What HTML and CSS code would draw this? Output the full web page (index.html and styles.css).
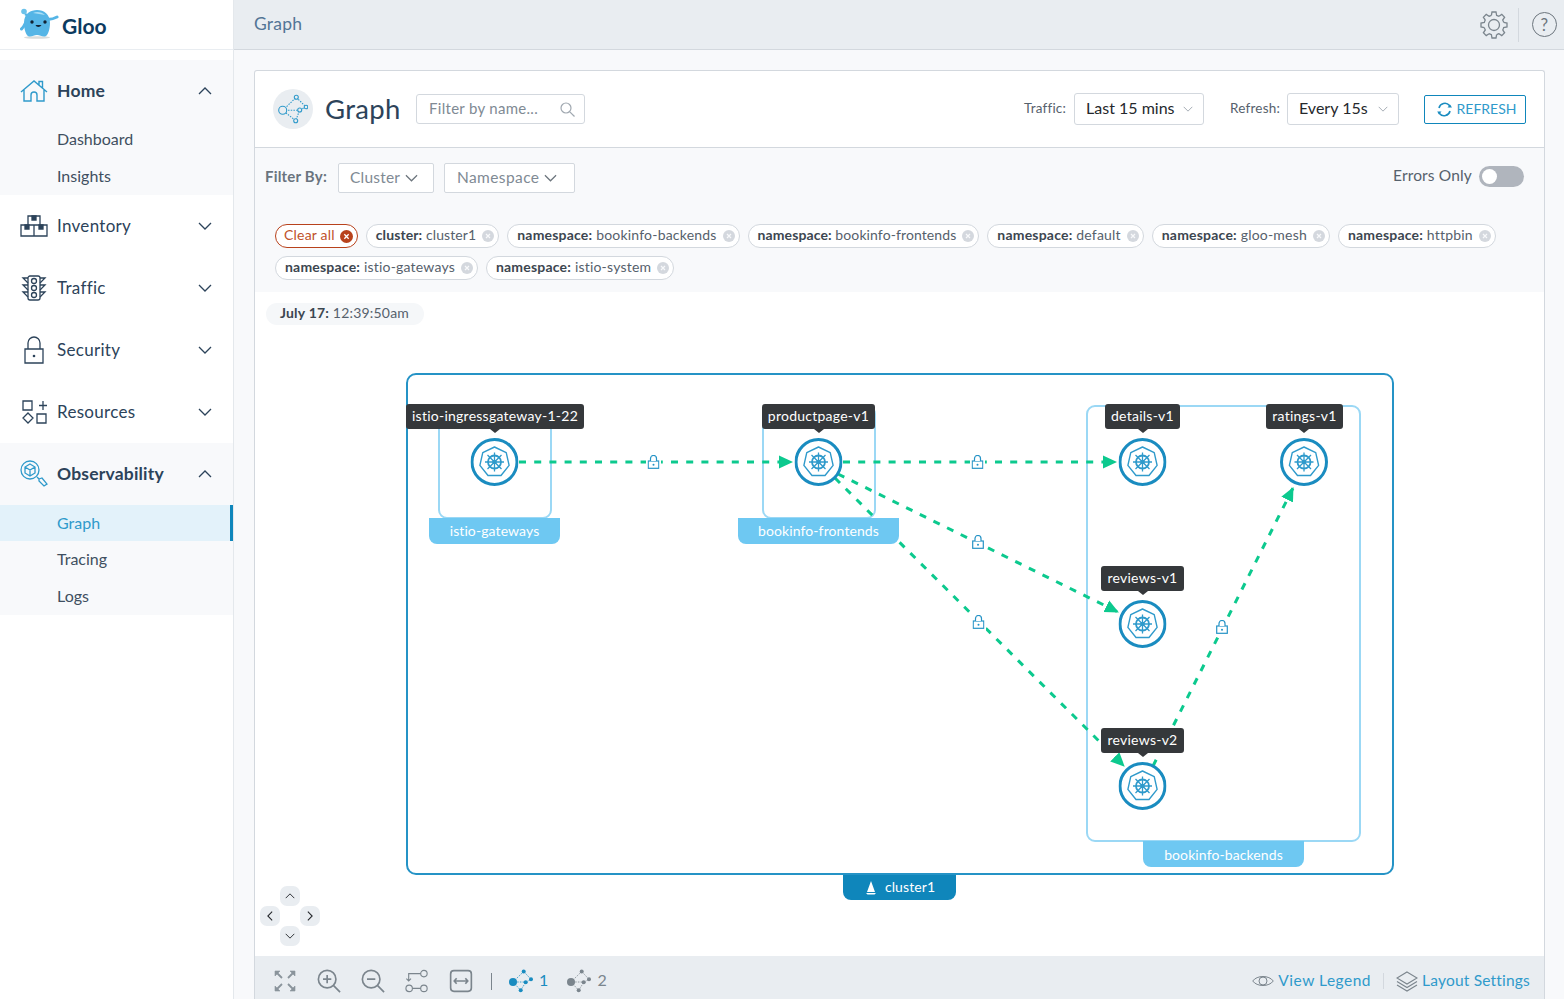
FILE: index.html
```html
<!DOCTYPE html>
<html lang="en">
<head>
    <meta charset="UTF-8">
    <title>Gloo Graph</title>
    <link rel="stylesheet" href="styles.css">
</head>
<body>
    <svg class="defs" width="0" height="0">
        <defs>
            <symbol id="chev-down" viewBox="0 0 14 8"><path d="M1 1l6 6 6-6" fill="none" stroke="currentColor" stroke-width="1.3"/></symbol>
            <symbol id="chev-up" viewBox="0 0 14 8"><path d="M1 7l6-6 6 6" fill="none" stroke="currentColor" stroke-width="1.3"/></symbol>
            <symbol id="chip-x" viewBox="0 0 12 12"><circle cx="6" cy="6" r="6" fill="#d4d8de"/><path d="M4 4l4 4M8 4l-4 4" stroke="#f8f9fb" stroke-width="1.2"/></symbol>
            <symbol id="graph-mini" viewBox="0 0 26 24">
                <path d="M4 13L14.700 2.500 22 10.300 16.700 13.300 11.700 21.300 4 13H16.700" fill="none" stroke="currentColor" stroke-width=".8" stroke-dasharray="1.500 1.200"/>
                <circle cx="4" cy="13" r="4" fill="currentColor"/><circle cx="14.700" cy="2.500" r="2" fill="currentColor"/>
                <circle cx="22" cy="10.300" r="2" fill="currentColor"/><circle cx="16.700" cy="13.300" r="2" fill="currentColor"/><circle cx="11.700" cy="21.300" r="2" fill="currentColor"/>
            </symbol>
            <symbol id="k8s" viewBox="-24 -24 48 48">
                <circle r="22.500" fill="#fff" stroke="#1a8cc0" stroke-width="3"/>
                <path d="M0-15L11.730-9.350 14.620 3.340 6.510 13.510H-6.510L-14.620 3.340-11.730-9.350Z" fill="none" stroke="#2f9acb" stroke-width="1.400" stroke-linejoin="round"/>
                <circle r="6.500" fill="none" stroke="#2f9acb" stroke-width="1.800"/>
                <path d="M0-9.500V9.500M-9.500 0H9.500M-7-7L7 7M7-7L-7 7" stroke="#2f9acb" stroke-width="1.300"/>
                <circle r="2.200" fill="#2f9acb"/>
            </symbol>
            <symbol id="lock" viewBox="0 0 12 14">
                <rect x=".7" y="6" width="10.600" height="7.300" fill="#fff" stroke="#2593c6" stroke-width="1.200"/>
                <path d="M3 6V3.500a3 3 0 016 0V6" fill="#fff" stroke="#2593c6" stroke-width="1.200"/>
                <circle cx="6" cy="9.700" r="1" fill="#2593c6"/>
            </symbol>
        </defs>
    </svg>

    <div class="app">
        <aside class="sidebar">
            <div class="logo">
                <svg class="logo-mark" width="40" height="40" viewBox="0 0 40 40">
                    <ellipse cx="18" cy="32.500" rx="13" ry="1.300" fill="#d8dcdc"/>
                    <path d="M2.500 24C5 22 6 19 8 15M28 14c3 1 6 0 10-2" fill="none" stroke="#55b5e6" stroke-width="3" stroke-linecap="round"/>
                    <path d="M6 9l5 3" stroke="#55b5e6" stroke-width="2.500" fill="none"/>
                    <circle cx="5" cy="6.500" r="2.800" fill="#6cc2ea"/>
                    <path d="M5 18C5 8 12 5 18 5 25 5 31 9 31 18 31 24 29 31 26 31.500 23 32 21 30 18 30 15 30 13 32 10 31.500 7 31 5 24 5 18Z" fill="#55b5e6"/>
                    <path d="M14 8c4-2 9-1 12 2-4-1-8-1-12-2z" fill="#a9def6"/>
                    <circle cx="13" cy="17" r="1.700" fill="#123"/><circle cx="26" cy="17" r="1.700" fill="#123"/>
                    <path d="M16.500 20c1 2.500 4.500 2.500 6 0z" fill="#123"/>
                </svg>
                <span class="logo-text">Gloo</span>
            </div>
            <nav class="nav">
                <div class="nav-group is-open">
                    <div class="nav-item is-bold">
                        <svg class="nav-icon" viewBox="0 0 28 24" fill="none" stroke="#2f9acb" stroke-width="1.400"><path d="M1 13L14 2l13 11M4 10.500V22h7v-6a3 3 0 016 0v6h7V10.500M19 6V2.500h3.500V9"/></svg>
                        <span>Home</span>
                        <svg class="nav-chev"><use href="#chev-up"/></svg>
                    </div>
                    <a class="nav-sub">Dashboard</a>
                    <a class="nav-sub">Insights</a>
                </div>
                <div class="nav-item">
                    <svg class="nav-icon" viewBox="0 0 28 24" fill="none" stroke="#2c435a" stroke-width="1.300"><path d="M8 11V2h12v9M1 11h26v11H1zM14 11v11"/><path d="M12 2h4v4h-4zM5 11h4v4H5zM19 11h4v4h-4z" fill="#2c435a"/></svg>
                    <span>Inventory</span>
                    <svg class="nav-chev"><use href="#chev-down"/></svg>
                </div>
                <div class="nav-item">
                    <svg class="nav-icon" viewBox="0 0 28 26" fill="none" stroke="#2c435a" stroke-width="1.300"><rect x="8" y="1" width="12" height="24" rx="2"/><circle cx="14" cy="6" r="2.500"/><circle cx="14" cy="13" r="2.500"/><circle cx="14" cy="20" r="2.500"/><path d="M8 3H3l5 5M8 10H3l5 5M8 17H3l5 5M20 3h5l-5 5M20 10h5l-5 5M20 17h5l-5 5"/></svg>
                    <span>Traffic</span>
                    <svg class="nav-chev"><use href="#chev-down"/></svg>
                </div>
                <div class="nav-item">
                    <svg class="nav-icon" viewBox="0 0 28 28" fill="none" stroke="#2c435a" stroke-width="1.300"><path d="M5 13h18v14H5zM8 13V7a6 6 0 0112 0v6"/><circle cx="14" cy="20" r="1.300" fill="#2c435a" stroke="none"/></svg>
                    <span>Security</span>
                    <svg class="nav-chev"><use href="#chev-down"/></svg>
                </div>
                <div class="nav-item">
                    <svg class="nav-icon" viewBox="0 0 28 24" fill="none" stroke="#2c435a" stroke-width="1.300"><path d="M3 1h9v9H3zM19 5.500h8M23 1v9M8 13l5 5-5 5-5-5zM17 14h9v9h-9z"/></svg>
                    <span>Resources</span>
                    <svg class="nav-chev"><use href="#chev-down"/></svg>
                </div>
                <div class="nav-group is-open">
                    <div class="nav-item is-bold">
                        <svg class="nav-icon" viewBox="0 0 28 28" fill="none" stroke="#2f9acb" stroke-width="1.300"><circle cx="10" cy="10" r="9"/><path d="M10 4l5 3v6l-5 3-5-3V7zM5 7l5 3 5-3M10 10v6"/><path d="M17 17l2 2M19 19l3-1 5 6-3 2-5-5z"/></svg>
                        <span>Observability</span>
                        <svg class="nav-chev"><use href="#chev-up"/></svg>
                    </div>
                    <a class="nav-sub is-active">Graph</a>
                    <a class="nav-sub">Tracing</a>
                    <a class="nav-sub">Logs</a>
                </div>
            </nav>
        </aside>

        <div class="main">
            <header class="topbar">
                <span class="crumb">Graph</span>
                <div class="topbar-tools">
                    <svg class="gear" width="28" height="28" viewBox="-14 -14 28 28" fill="none" stroke="#7b858d" stroke-width="1.300">
                        <circle r="5.500"/>
                        <g id="gear-tooth"><path d="M-2.600-9.660L-2-13H2L2.600-9.660A10 10 0 015-8.660"/></g>
                        <use href="#gear-tooth" transform="rotate(45)"/>
                        <use href="#gear-tooth" transform="rotate(90)"/>
                        <use href="#gear-tooth" transform="rotate(135)"/>
                        <use href="#gear-tooth" transform="rotate(180)"/>
                        <use href="#gear-tooth" transform="rotate(225)"/>
                        <use href="#gear-tooth" transform="rotate(270)"/>
                        <use href="#gear-tooth" transform="rotate(315)"/>
                    </svg>
                    <span class="topbar-sep"></span>
                    <span class="help">?</span>
                </div>
            </header>

            <section class="card">
                <div class="card-head">
                    <span class="head-icon">
                        <svg width="30" height="30" viewBox="0 0 30 30" fill="none" stroke="#2f9acb" stroke-width="1.100"><path d="M4.700 16.300L18.300 3.300 28 13 21.700 16 17.700 26.700 4.700 16.300H21.700" stroke-dasharray="1.500 1.200"/><circle cx="4.700" cy="16.300" r="4" fill="#e9edf1"/><circle cx="18.300" cy="3.300" r="2" fill="#e9edf1"/><circle cx="28" cy="13" r="1.800" fill="#e9edf1"/><circle cx="21.700" cy="16" r="2" fill="#e9edf1"/><circle cx="17.700" cy="26.700" r="2" fill="#e9edf1"/></svg>
                    </span>
                    <h1 class="title">Graph</h1>
                    <div class="search">
                        <span class="lift">Filter by name...</span>
                        <svg width="15" height="15" viewBox="0 0 15 15" fill="none" stroke="#a0a8b0" stroke-width="1.200"><circle cx="6" cy="6" r="5"/><path d="M9.800 9.800L14.500 14.500"/></svg>
                    </div>
                    <div class="head-right">
                        <span class="select-label lift">Traffic:</span>
                        <div class="select select-traffic"><span class="lift">Last 15 mins</span><svg class="select-chev"><use href="#chev-down"/></svg></div>
                        <span class="select-label select-label-gap lift">Refresh:</span>
                        <div class="select select-refresh"><span class="lift">Every 15s</span><svg class="select-chev"><use href="#chev-down"/></svg></div>
                        <button class="refresh">
                            <svg width="15" height="15" viewBox="0 0 15 15" fill="none" stroke="#1a8cc0" stroke-width="1.600"><path d="M2 6a6 6 0 0110.500-2.500L13 5M13 9A6 6 0 012.500 11.500L2 10"/><path d="M10.500 5.500H15L13 2.500zM.2 9.500h4.300L2 12.500z" fill="#1a8cc0" stroke="none"/></svg>
                            <span class="refresh-text">REFRESH</span>
                        </button>
                    </div>
                </div>

                <div class="filters">
                    <div class="filter-row">
                        <span class="filter-label">Filter By:</span>
                        <div class="dropdown dropdown-cluster"><span class="lift">Cluster</span><svg class="dropdown-chev"><use href="#chev-down"/></svg></div>
                        <div class="dropdown dropdown-namespace"><span class="lift">Namespace</span><svg class="dropdown-chev"><use href="#chev-down"/></svg></div>
                        <div class="errors">
                            <span class="lift">Errors Only</span>
                            <span class="toggle"><span class="knob"></span></span>
                        </div>
                    </div>
                    <div class="chips">
                        <span class="chip chip-clear"><span class="lift">Clear all</span><svg width="13" height="13" viewBox="0 0 12 12"><circle cx="6" cy="6" r="6" fill="#b8421c"/><path d="M4 4l4 4M8 4l-4 4" stroke="#fff" stroke-width="1.200"/></svg></span>
                        <span class="chip chip-tight"><span class="lift"><b>cluster:</b> cluster1</span><svg class="chip-icon"><use href="#chip-x"/></svg></span>
                        <span class="chip"><span class="lift"><b>namespace:</b> bookinfo-backends</span><svg class="chip-icon"><use href="#chip-x"/></svg></span>
                        <span class="chip chip-tight"><span class="lift"><b>namespace:</b> bookinfo-frontends</span><svg class="chip-icon"><use href="#chip-x"/></svg></span>
                        <span class="chip"><span class="lift"><b>namespace:</b> default</span><svg class="chip-icon"><use href="#chip-x"/></svg></span>
                        <span class="chip"><span class="lift"><b>namespace:</b> gloo-mesh</span><svg class="chip-icon"><use href="#chip-x"/></svg></span>
                        <span class="chip"><span class="lift"><b>namespace:</b> httpbin</span><svg class="chip-icon"><use href="#chip-x"/></svg></span>
                        <span class="chip"><span class="lift"><b>namespace:</b> istio-gateways</span><svg class="chip-icon"><use href="#chip-x"/></svg></span>
                        <span class="chip"><span class="lift"><b>namespace:</b> istio-system</span><svg class="chip-icon"><use href="#chip-x"/></svg></span>
                    </div>
                </div>

                <div class="canvas">
                    <div class="stamp"><b>July 17:</b> 12:39:50am</div>

                    <svg class="graph" width="1290" height="664" viewBox="255 292 1290 664">
                        <defs>
                            <marker id="head" markerUnits="userSpaceOnUse" markerWidth="15" markerHeight="14" refX="13" refY="7" orient="auto"><path d="M0 .5L14 7 0 13.500z" fill="#0cc98e"/></marker>
                        </defs>
                        <rect class="box-cluster" x="407" y="374" width="986" height="500" rx="9"/>
                        <rect class="box-ns" x="439" y="406" width="112" height="112" rx="8"/>
                        <rect class="box-ns" x="763" y="406" width="112" height="112" rx="8"/>
                        <rect class="box-ns" x="1087" y="406" width="273" height="435" rx="8"/>

                        <line class="edge" x1="519" y1="462" x2="792" y2="462" marker-end="url(#head)"/>
                        <line class="edge" x1="843" y1="462" x2="1116" y2="462" marker-end="url(#head)"/>
                        <line class="edge" x1="838" y1="474" x2="1118" y2="612" marker-end="url(#head)"/>
                        <line class="edge" x1="835" y1="478" x2="1124" y2="766" marker-end="url(#head)"/>
                        <line class="edge" x1="1153" y1="766" x2="1293" y2="488" marker-end="url(#head)"/>

                        <rect class="edge-gap" x="646" y="453" width="15" height="18"/>
                        <rect class="edge-gap" x="970" y="453" width="15" height="18"/>
                        <rect class="edge-gap" x="970" y="533" width="16" height="18"/>
                        <rect class="edge-gap" x="971" y="613" width="15" height="18"/>
                        <rect class="edge-gap" x="1214" y="618" width="16" height="18"/>
                        <use href="#lock" x="647.500" y="455" width="12" height="14"/>
                        <use href="#lock" x="971.500" y="455" width="12" height="14"/>
                        <use href="#lock" x="972" y="535" width="12" height="14"/>
                        <use href="#lock" x="972.500" y="615" width="12" height="14"/>
                        <use href="#lock" x="1216" y="620" width="12" height="14"/>

                        <use href="#k8s" x="470.500" y="438" width="48" height="48"/>
                        <use href="#k8s" x="794.500" y="438" width="48" height="48"/>
                        <use href="#k8s" x="1118.500" y="438" width="48" height="48"/>
                        <use href="#k8s" x="1280" y="438" width="48" height="48"/>
                        <use href="#k8s" x="1118.500" y="600" width="48" height="48"/>
                        <use href="#k8s" x="1118.500" y="762" width="48" height="48"/>

                        <path class="tab" d="M429 518h131v18a8 8 0 01-8 8H437a8 8 0 01-8-8z"/>
                        <text class="tab-text" x="494.500" y="536">istio-gateways</text>
                        <path class="tab" d="M738 518h161v18a8 8 0 01-8 8H746a8 8 0 01-8-8z"/>
                        <text class="tab-text" x="818.500" y="536">bookinfo-frontends</text>
                        <path class="tab" d="M1143 841h161v18a8 8 0 01-8 8h-145a8 8 0 01-8-8z"/>
                        <text class="tab-text" x="1223.500" y="860">bookinfo-backends</text>
                        <path class="tab-cluster" d="M843 875h113v17a8 8 0 01-8 8h-97a8 8 0 01-8-8z"/>
                        <path d="M871 881l-4 11h8zM866 893h10l-1.500 1.500h-7z" fill="#fff"/>
                        <text class="tab-text" x="910" y="892">cluster1</text>

                        <path class="tip" d="M406 407a3 3 0 013-3h172a3 3 0 013 3v19a3 3 0 01-3 3H500l-5 4-5-4H409a3 3 0 01-3-3z"/>
                        <text class="tip-text" x="495" y="421">istio-ingressgateway-1-22</text>
                        <path class="tip" d="M762 407a3 3 0 013-3h107a3 3 0 013 3v19a3 3 0 01-3 3H824l-5 4-5-4H765a3 3 0 01-3-3z"/>
                        <text class="tip-text" x="818.500" y="421">productpage-v1</text>
                        <path class="tip" d="M1105 407a3 3 0 013-3h69a3 3 0 013 3v19a3 3 0 01-3 3h-29l-5 4-5-4h-30a3 3 0 01-3-3z"/>
                        <text class="tip-text" x="1142.500" y="421">details-v1</text>
                        <path class="tip" d="M1266 407a3 3 0 013-3h71a3 3 0 013 3v19a3 3 0 01-3 3h-31l-5 4-5-4h-30a3 3 0 01-3-3z"/>
                        <text class="tip-text" x="1304.500" y="421">ratings-v1</text>
                        <path class="tip" d="M1101 569a3 3 0 013-3h77a3 3 0 013 3v19a3 3 0 01-3 3h-33l-5 4-5-4h-34a3 3 0 01-3-3z"/>
                        <text class="tip-text" x="1142.500" y="583">reviews-v1</text>
                        <path class="tip" d="M1101 731a3 3 0 013-3h77a3 3 0 013 3v19a3 3 0 01-3 3h-33l-5 4-5-4h-34a3 3 0 01-3-3z"/>
                        <text class="tip-text" x="1142.500" y="745">reviews-v2</text>
                    </svg>

                    <div class="pan">
                        <span class="pan-btn pan-up"><svg width="10" height="6"><use href="#chev-up"/></svg></span>
                        <span class="pan-btn pan-left"><svg width="6" height="10" viewBox="0 0 8 14"><path d="M7 1L1 7l6 6" fill="none" stroke="currentColor" stroke-width="1.500"/></svg></span>
                        <span class="pan-btn pan-right"><svg width="6" height="10" viewBox="0 0 8 14"><path d="M1 1l6 6-6 6" fill="none" stroke="currentColor" stroke-width="1.500"/></svg></span>
                        <span class="pan-btn pan-down"><svg width="10" height="6"><use href="#chev-down"/></svg></span>
                    </div>
                </div>

                <footer class="toolbar">
                    <div class="tools">
                        <svg class="tool" viewBox="0 0 24 24" fill="#8a949c" stroke="#8a949c" stroke-width="1.800"><path d="M2 2h5L2 7zM22 2h-5l5 5zM2 22h5l-5-5zM22 22h-5l5-5z" stroke-width=".6"/><path d="M4 4l5 5M20 4l-5 5M4 20l5-5M20 20l-5-5"/></svg>
                        <svg class="tool" viewBox="0 0 26 26" fill="none" stroke="#7b858d" stroke-width="1.800"><circle cx="11" cy="11" r="9.500"/><path d="M18 18l7 7M6.500 11h9M11 6.500v9"/></svg>
                        <svg class="tool" viewBox="0 0 26 26" fill="none" stroke="#7b858d" stroke-width="1.800"><circle cx="11" cy="11" r="9.500"/><path d="M18 18l7 7M6.500 11h9"/></svg>
                        <svg class="tool" viewBox="0 0 26 24" fill="none" stroke="#7b858d" stroke-width="1.200"><circle cx="20.500" cy="4" r="3.500"/><circle cx="4.500" cy="20" r="3.500"/><circle cx="20.500" cy="20" r="3.500"/><path d="M8 20h9M17 4H4v8M1.500 9.500L4 12l2.500-2.500"/></svg>
                        <svg class="tool" viewBox="0 0 22 22" fill="none" stroke="#7b858d" stroke-width="1.500"><rect x="1.500" y="1.500" width="19" height="19" rx="3"/><path d="M5 11h12M7 8.500L4.800 11 7 13.500M15 8.500L17.200 11 15 13.500"/></svg>
                        <span class="tool-sep"></span>
                        <span class="layout-pick is-on"><svg width="26" height="24"><use href="#graph-mini"/></svg><span class="lift">1</span></span>
                        <span class="layout-pick"><svg width="26" height="24"><use href="#graph-mini"/></svg><span class="lift">2</span></span>
                    </div>
                    <div class="links">
                        <svg width="22" height="14" viewBox="0 0 22 14" fill="none" stroke="#7b858d" stroke-width="1"><path d="M.7 7C5 1 17 1 21.300 7 17 13 5 13 .7 7z"/><circle cx="11" cy="7" r="4"/></svg>
                        <a class="link link-legend lift">View Legend</a>
                        <span class="link-sep"></span>
                        <svg width="22" height="21" viewBox="0 0 22 21" fill="none" stroke="#7b858d" stroke-width="1.100"><path d="M11 1l10 6-10 6L1 7zM1 10.500l10 6 10-6M1 14l10 6 10-6"/></svg>
                        <a class="link lift">Layout Settings</a>
                    </div>
                </footer>
            </section>
        </div>
    </div>
</body>
</html>
```

FILE: styles.css
```css
* {
    box-sizing: border-box;
}
body {
    margin: 0;
    height: 999px;
    overflow: hidden;
    font-family: "Lato", "Open Sans", sans-serif;
    font-size: 16px;
    letter-spacing: 0.2px;
    color: #2c435a;
    background-color: #f8f9fb;
}
.defs {
    position: absolute;
}
.app {
    display: flex;
    height: 999px;
}
/* Lato sits a little low in its box */
.lift {
    padding-bottom: 3px;
}

/* sidebar */
.sidebar {
    width: 234px;
    flex-shrink: 0;
    background-color: white;
    border-right: 1px solid #e4e8ec;
}
.logo {
    height: 50px;
    display: flex;
    align-items: center;
    gap: 3px;
    padding-left: 19px;
    border-bottom: 1px solid #e9edf1;
}
.logo-text {
    font-size: 21px;
    font-weight: 700;
    letter-spacing: 0;
    padding-top: 1px;
    color: #0c3b5f;
}
.nav {
    padding-top: 10px;
}
.nav-group {
    background-color: #f8f9fb;
}
.nav-group:first-child .nav-item {
    height: 61px;
}
.nav-item {
    height: 62px;
    display: flex;
    align-items: center;
    font-size: 17px;
    letter-spacing: 0.3px;
    padding-left: 20px;
    padding-right: 21px;
}
.nav-item span {
    flex: 1;
    padding-bottom: 1px;
}
.is-bold {
    font-size: 17.500px;
    font-weight: 700;
    letter-spacing: 0.2px;
}
.nav-icon {
    width: 28px;
    height: 28px;
    margin-right: 9px;
}
.nav-chev {
    width: 14px;
    height: 8px;
    color: #2c435a;
}
.nav-sub {
    display: block;
    height: 37px;
    line-height: 35px;
    padding-left: 57px;
    letter-spacing: 0;
    color: #3f4f60;
}
.nav-sub.is-active {
    height: 36px;
    background-color: #e3f2fa;
    border-right: 3px solid #0f86bb;
    color: #2f9acb;
}

/* top bar */
.main {
    flex: 1;
    min-width: 0;
}
.topbar {
    height: 50px;
    display: flex;
    align-items: center;
    justify-content: space-between;
    padding-left: 20px;
    background-color: #e9edf1;
    border-bottom: 1px solid #d3d8de;
}
.crumb {
    font-size: 17.500px;
    padding-bottom: 3px;
    color: #537596;
}
.topbar-tools {
    display: flex;
    align-items: center;
    gap: 10px;
    padding-right: 7px;
}
.gear {
    margin-right: -1px;
}
.topbar-sep {
    width: 1px;
    height: 34px;
    margin-left: 1px;
    background-color: #d3d8de;
}
.help {
    width: 25px;
    height: 25px;
    margin-left: 3px;
    border: 1.3px solid #6c757d;
    border-radius: 50%;
    text-align: center;
    line-height: 23px;
    font-size: 17px;
    color: #6c757d;
}

/* card */
.card {
    margin: 20px 19px 0 20px;
    background-color: white;
    border: 1px solid #d3d8de;
    border-bottom: none;
    border-radius: 3px 3px 0 0;
}
.card-head {
    height: 77px;
    display: flex;
    align-items: center;
    padding: 0 18px 0 18px;
    border-bottom: 1px solid #d3d8de;
}
.head-icon {
    width: 40px;
    height: 40px;
    display: flex;
    align-items: center;
    justify-content: center;
    border-radius: 50%;
    background-color: #e9edf1;
}
.title {
    margin: 0 16px 0 12px;
    width: 75px;
    padding-bottom: 2px;
    font-size: 27.500px;
    font-weight: 400;
    letter-spacing: 0.3px;
}
.search {
    width: 169px;
    height: 30px;
    display: flex;
    align-items: center;
    justify-content: space-between;
    padding: 0 9px 0 12px;
    font-size: 15px;
    letter-spacing: 0.3px;
    border: 1px solid #d3d8de;
    border-radius: 3px;
    color: #808a94;
}
.head-right {
    margin-left: auto;
    display: flex;
    align-items: center;
}
.select-label {
    font-size: 13.500px;
    letter-spacing: 0.2px;
    color: #56616c;
    margin-right: 8px;
}
.select-label-gap {
    margin-left: 26px;
    margin-right: 7px;
}
.select {
    height: 32px;
    display: flex;
    align-items: center;
    justify-content: space-between;
    padding: 0 10px 0 11px;
    border: 1px solid #d3d8de;
    border-radius: 3px;
    letter-spacing: 0;
    color: #25282c;
}
.select-traffic {
    width: 130px;
}
.select-refresh {
    width: 112px;
}
.select-chev {
    width: 10px;
    height: 6px;
    color: #a0a8b0;
}
.refresh {
    width: 102px;
    height: 29px;
    margin-left: 25px;
    display: flex;
    align-items: center;
    justify-content: center;
    gap: 5px;
    padding: 0 0 0 3px;
    font-family: inherit;
    font-size: 14px;
    letter-spacing: 0;
    color: #2f9acb;
    background-color: white;
    border: 1px solid #0f86bb;
    border-radius: 2px;
}
.refresh-text {
    padding-bottom: 1px;
}

/* filters */
.filters {
    height: 144px;
    padding: 15px 20px 0 10px;
    background-color: #f8f9fb;
}
.filter-row {
    height: 30px;
    display: flex;
    align-items: center;
    gap: 10px;
}
.filter-label {
    width: 63px;
    padding-bottom: 4px;
    font-size: 15px;
    font-weight: 700;
    white-space: nowrap;
    color: #6a747e;
}
.dropdown {
    height: 30px;
    display: flex;
    align-items: center;
    gap: 5px;
    padding: 0 11px;
    font-size: 15.500px;
    background-color: white;
    border: 1px solid #d3d8de;
    border-radius: 2px;
    color: #808a94;
}
.dropdown-cluster {
    width: 96px;
}
.dropdown-namespace {
    width: 131px;
    padding-left: 12px;
    letter-spacing: 0.4px;
}
.dropdown-chev {
    width: 13px;
    height: 8px;
    color: #6c757d;
}
.errors {
    margin-left: auto;
    display: flex;
    align-items: center;
    gap: 7px;
    padding-bottom: 3px;
    font-size: 15.500px;
    letter-spacing: 0.15px;
    color: #56616c;
}
.toggle {
    width: 45px;
    height: 21px;
    padding: 3px;
    border-radius: 11px;
    background-color: #b0b5bd;
}
.knob {
    display: block;
    width: 15px;
    height: 15px;
    border-radius: 50%;
    background-color: white;
}
.chips {
    display: flex;
    flex-wrap: wrap;
    gap: 8px;
    padding: 31px 0 0 10px;
}
.chip {
    height: 24px;
    display: flex;
    align-items: center;
    gap: 6px;
    padding: 0 4px 0 9px;
    font-size: 14px;
    letter-spacing: 0.2px;
    white-space: nowrap;
    color: #56616c;
    background-color: white;
    border: 1px solid #d3d8de;
    border-radius: 12px;
}
.chip b {
    color: #3c4650;
}
.chip-tight {
    letter-spacing: 0.1px;
}
.chip-clear {
    gap: 5px;
    padding-left: 8px;
    color: #c0522a;
    border-color: #b8421c;
}
.chip-icon {
    width: 12px;
    height: 12px;
}

/* graph canvas */
.canvas {
    position: relative;
    height: 664px;
    background-color: white;
}
.stamp {
    position: absolute;
    left: 11px;
    top: 11px;
    z-index: 1;
    width: 158px;
    height: 22px;
    line-height: 20px;
    padding-left: 14px;
    font-size: 14px;
    letter-spacing: 0.2px;
    color: #56616c;
    background-color: #f5f7f9;
    border-radius: 11px;
}
.stamp b {
    color: #3c4650;
}
.graph {
    display: block;
}
.box-cluster {
    fill: white;
    stroke: #2593c6;
    stroke-width: 2;
}
.box-ns {
    fill: white;
    stroke: #9bd8f5;
    stroke-width: 2;
}
.edge {
    stroke: #0cc98e;
    stroke-width: 3;
    stroke-dasharray: 7 8.200;
}
.edge-gap {
    fill: white;
}
.tab {
    fill: #6ec8f2;
}
.tab-cluster {
    fill: #0f86bb;
}
.tab-text {
    fill: white;
    font-size: 14px;
    letter-spacing: 0.1px;
    text-anchor: middle;
}
.tip {
    fill: #35383b;
}
.tip-text {
    fill: white;
    font-size: 14px;
    letter-spacing: 0.25px;
    text-anchor: middle;
}
.pan {
    position: absolute;
    left: 5px;
    bottom: 10px;
    display: grid;
    grid-template-columns: repeat(3, 20px);
    grid-template-rows: repeat(3, 20px);
}
.pan-btn {
    display: flex;
    align-items: center;
    justify-content: center;
    color: #25282c;
    background-color: #e9edf1;
    border-radius: 7px;
}
.pan-up {
    grid-area: 1 / 2;
}
.pan-left {
    grid-area: 2 / 1;
}
.pan-right {
    grid-area: 2 / 3;
}
.pan-down {
    grid-area: 3 / 2;
}

/* bottom toolbar */
.toolbar {
    height: 43px;
    display: flex;
    align-items: center;
    justify-content: space-between;
    padding: 7px 14px 0 18px;
    background-color: #e9edf1;
}
.tools {
    display: flex;
    align-items: center;
}
.tool {
    width: 24px;
    height: 24px;
    margin-right: 20px;
}
.tool-sep {
    width: 1px;
    height: 17px;
    margin: 0 17px 0 -2px;
    background-color: #7b858d;
}
.layout-pick {
    display: flex;
    align-items: center;
    gap: 4px;
    margin-right: 19px;
    color: #7b858d;
}
.layout-pick.is-on {
    color: #1a8cc0;
}
.links {
    display: flex;
    align-items: center;
    gap: 4px;
}
.link {
    font-size: 15.500px;
    letter-spacing: 0.2px;
    color: #2f9acb;
}
.link-legend {
    letter-spacing: 0.5px;
}
.link-sep {
    width: 1px;
    height: 16px;
    margin: 0 8px;
    background-color: #d3d8de;
}
```
